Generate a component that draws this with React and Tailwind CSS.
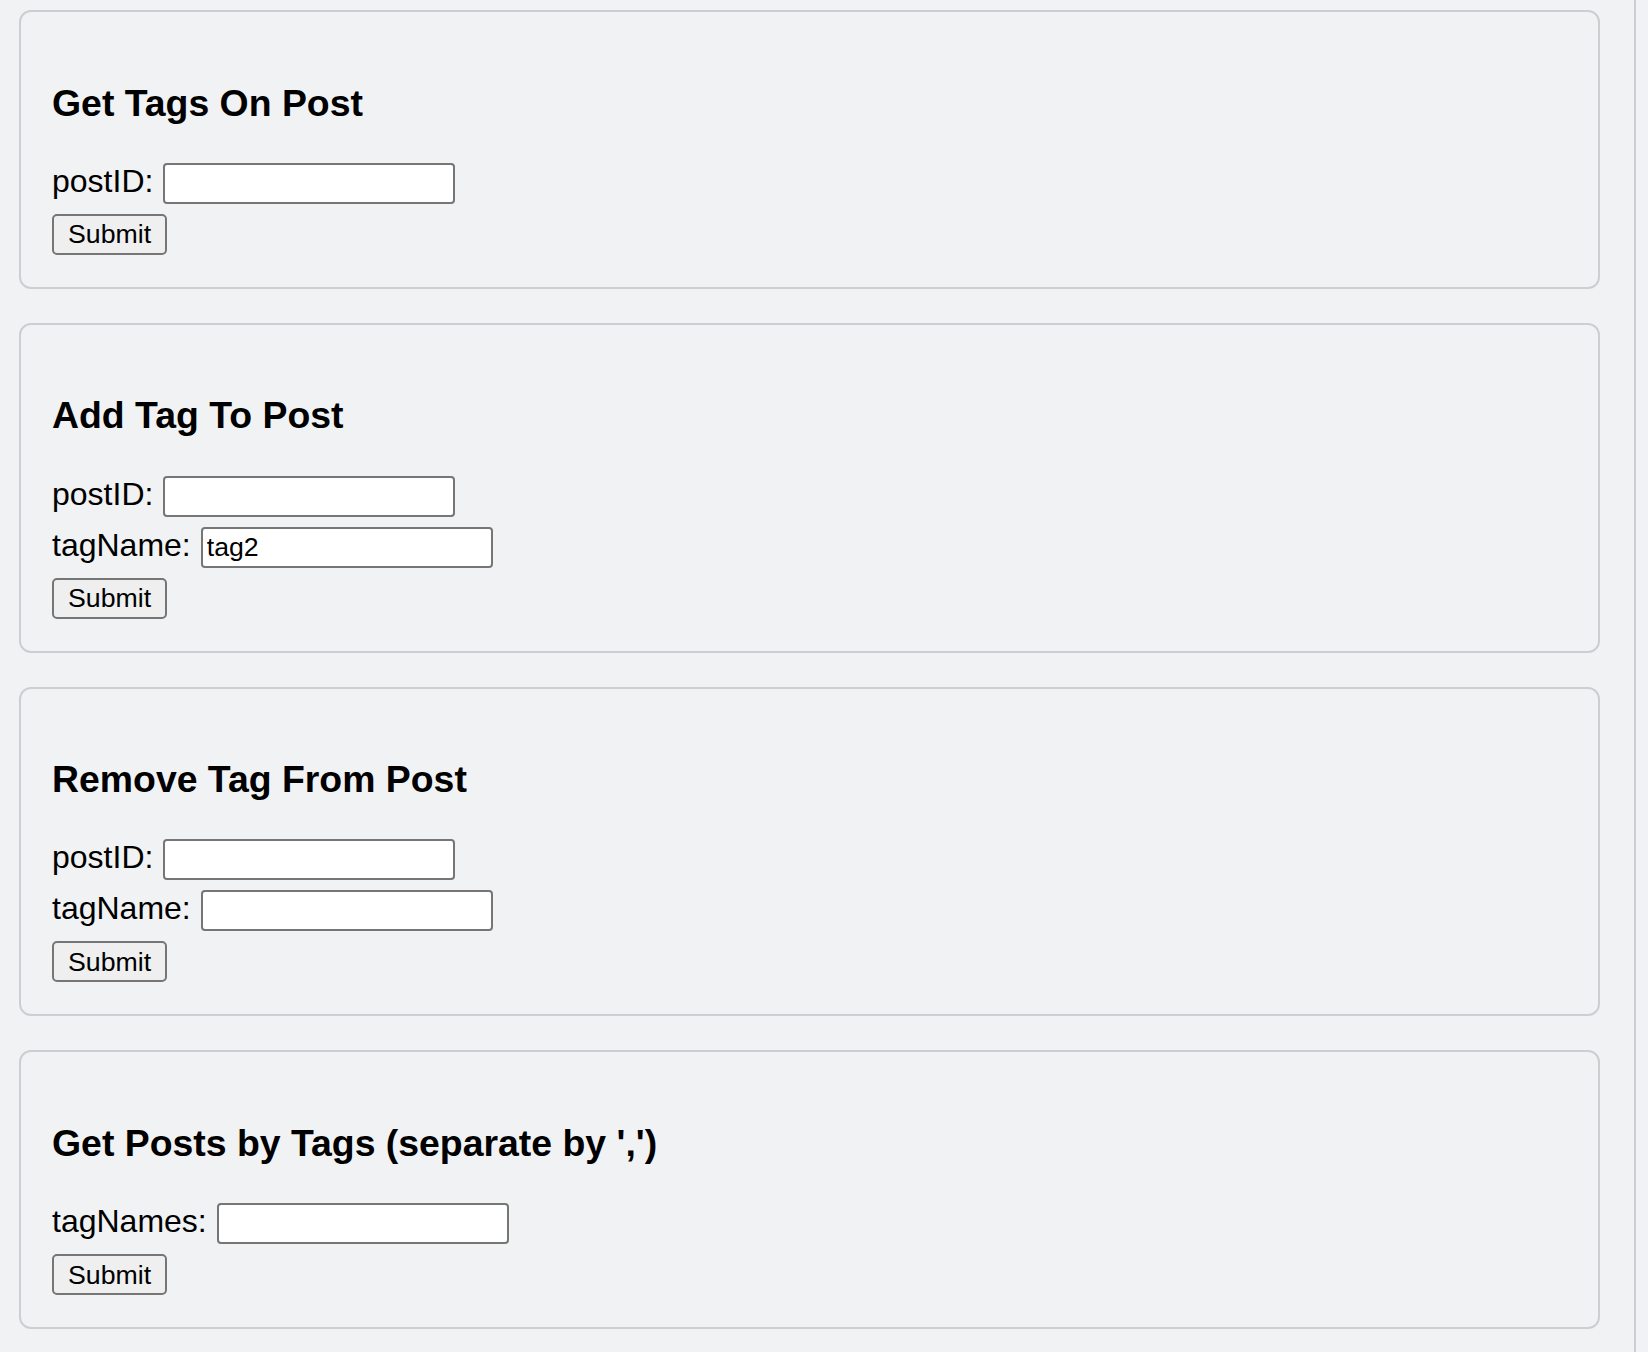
import React from "react";

const cards = [
  { title: "Get Tags On Post", fields: [{ label: "postID:", value: "" }] },
  {
    title: "Add Tag To Post",
    fields: [
      { label: "postID:", value: "" },
      { label: "tagName:", value: "tag2" },
    ],
  },
  {
    title: "Remove Tag From Post",
    fields: [
      { label: "postID:", value: "" },
      { label: "tagName:", value: "" },
    ],
  },
  {
    title: "Get Posts by Tags (separate by ',')",
    fields: [{ label: "tagNames:", value: "" }],
  },
];

function Card({ title, fields }) {
  return (
    <div className="border-2 border-[#cdced1] rounded-[12px] bg-[#f1f2f4] pl-[31px] pr-[31px] pt-[32px] pb-[32px]">
      <h3 className="text-[37.4px] leading-[43px] font-bold text-black mt-[37.6px] mb-[38.2px]">
        {title}
      </h3>
      <div className="flex flex-col gap-[10px] items-start">
        {fields.map((f, i) => (
          <div key={i} className="flex items-baseline gap-[10px]">
            <label className="text-[32px] leading-[36.8px] text-black">{f.label}</label>
            <input
              type="text"
              defaultValue={f.value}
              className="w-[292px] h-[41px] border-2 border-[#767676] rounded-[4px] bg-white px-[4px] text-[26.7px] text-black outline-none"
            />
          </div>
        ))}
        <button className="h-[41px] px-[14px] border-2 border-[#767676] rounded-[5px] bg-[#efefef] text-[26.7px] leading-[30px] text-black">
          Submit
        </button>
      </div>
    </div>
  );
}

export default function App() {
  return (
    <div
      className="flex min-h-[1352px] bg-[#f1f2f4]"
      style={{ fontFamily: '"Liberation Sans", Arial, Helvetica, sans-serif' }}
    >
      <div className="w-[1634px] shrink-0 pl-[19px] pr-[34px] pt-[10px] flex flex-col gap-[34px]">
        {cards.map((c, i) => (
          <Card key={i} {...c} />
        ))}
      </div>
      <div className="flex-1 border-l-2 border-[#cdced1]" />
    </div>
  );
}
